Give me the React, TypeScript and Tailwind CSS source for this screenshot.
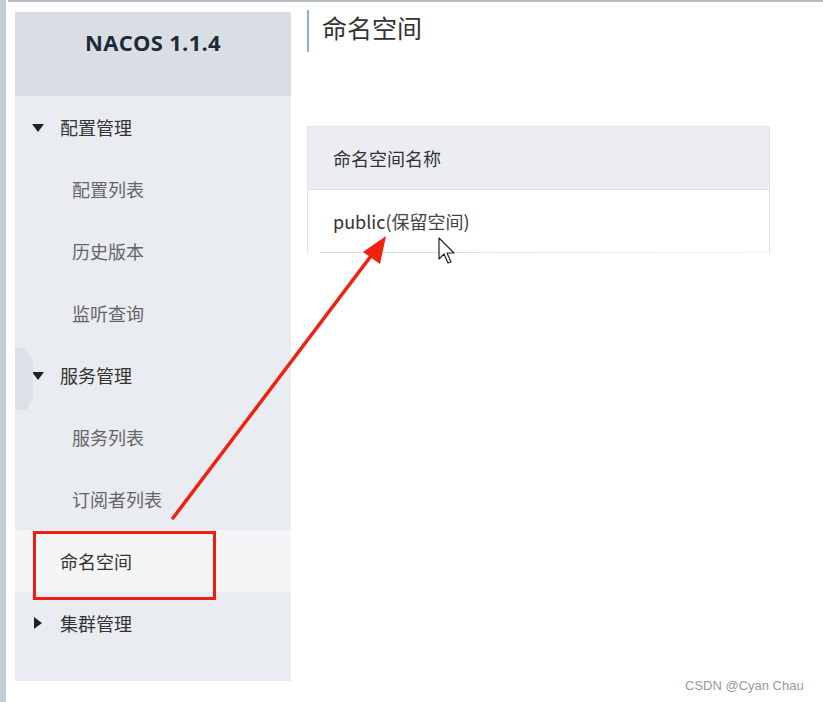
import React from 'react';

const cjk = { fontFamily: '"Noto Sans CJK SC", "Noto Sans", sans-serif' };

interface MenuItemProps {
  label: string;
  level: 'group' | 'child';
  open?: boolean;
  active?: boolean;
}

const MenuItem: React.FC<MenuItemProps> = ({ label, level, open, active }) => {
  if (level === 'group') {
    return (
      <div className="h-[62px] flex items-center pl-[17px] text-[18px] text-[#333]">
        {open ? (
          <span className="w-0 h-0 border-l-[6px] border-r-[6px] border-t-[8px] border-l-transparent border-r-transparent border-t-[#222] mr-[16px] mt-[2px]" />
        ) : (
          <span className="w-0 h-0 border-t-[6px] border-b-[6px] border-l-[8px] border-t-transparent border-b-transparent border-l-[#222] ml-[2px] mr-[18px]" />
        )}
        <span>{label}</span>
      </div>
    );
  }
  return (
    <div
      className={`h-[62px] flex items-center text-[18px] ${
        active ? 'bg-[#f4f5f7] pl-[45px] text-[#333]' : 'pl-[57px] text-[#666]'
      }`}
    >
      {label}
    </div>
  );
};

const Sidebar: React.FC = () => {
  const items: MenuItemProps[] = [
    { label: '配置管理', level: 'group', open: true },
    { label: '配置列表', level: 'child' },
    { label: '历史版本', level: 'child' },
    { label: '监听查询', level: 'child' },
    { label: '服务管理', level: 'group', open: true },
    { label: '服务列表', level: 'child' },
    { label: '订阅者列表', level: 'child' },
    { label: '命名空间', level: 'child', active: true },
    { label: '集群管理', level: 'group', open: false },
  ];

  return (
    <div className="relative w-[276px] h-[669px] bg-[#e9ecf0] flex flex-col" style={cjk}>
      <div className="h-[84px] bg-[#d9dee5] flex items-center justify-center pb-[24px]">
        <span
          className="text-[22px] font-bold text-[#1d2a3a] tracking-[0.3px]"
          style={{ fontFamily: '"Open Sans", "Noto Sans", sans-serif' }}
        >
          NACOS 1.1.4
        </span>
      </div>
      {items.map((item) => (
        <MenuItem key={item.label} {...item} />
      ))}
      {/* collapse handle */}
      <div className="absolute left-0 top-[336px] w-[18px] h-[62px] bg-[#dde1e7] [clip-path:polygon(0_0,60%_0,100%_20%,100%_80%,60%_100%,0_100%)]" />
    </div>
  );
};

const Main: React.FC = () => (
  <div className="flex-1 pl-[16px] -mt-[2px]" style={cjk}>
    <div className="border-l-2 border-[#8fb1d0] h-[42px] pl-[13px] flex items-start">
      <span className="text-[25px] leading-[34px] text-[#333]">命名空间</span>
    </div>
    <div className="mt-[74px] w-[463px] border border-[#dfe2e7] border-b-0">
      <div className="h-[63px] bg-[#ebedf1] border-b border-[#dcdfe5] flex items-center pl-[25px] text-[18px] text-[#333]">
        命名空间名称
      </div>
      <div className="h-[62px] flex items-center pl-[25px] text-[18px] text-[#333]">
        public(<span className="text-[#444]">保留空间</span>)
      </div>
      <div className="ml-[12px] h-px bg-gradient-to-r from-[#d5d8dd] to-[#f4f5f7]" />
    </div>
  </div>
);

const Annotations: React.FC = () => (
  <svg className="absolute inset-0 pointer-events-none" width="823" height="702" viewBox="0 0 823 702">
    <line x1="173" y1="518" x2="374" y2="252" stroke="#f0220f" strokeWidth="3.5" strokeLinecap="round" />
    <polygon points="386,236 380,264 363,252" fill="#f0220f" />
    {/* mouse cursor */}
    <path
      d="M439 238 L439 259 L444 254 L448 263 L451 262 L447 253 L454 253 Z"
      fill="#fff"
      stroke="#222"
      strokeWidth="1.2"
      strokeLinejoin="round"
    />
  </svg>
);

export default function App() {
  return (
    <div className="relative w-[823px] h-[702px] bg-white overflow-hidden flex">
      <div className="w-[6px] h-full bg-[#c4ccd7]" />
      <div className="flex-1 flex flex-col">
        <div className="ml-[2px] h-[2px] bg-[#b9bdc3]" />
        <div className="flex pl-[9px] pt-[10px]">
          <Sidebar />
          <Main />
        </div>
      </div>
      {/* highlight box */}
      <div className="absolute left-[33px] top-[531px] w-[183px] h-[69px] border-[3px] border-[#f01e12]" />
      <Annotations />
      <div
        className="absolute left-[685px] top-[676px] text-[13px] text-[#999]"
        style={{ fontFamily: '"Liberation Sans", Arial, sans-serif' }}
      >
        CSDN @Cyan Chau
      </div>
    </div>
  );
}
